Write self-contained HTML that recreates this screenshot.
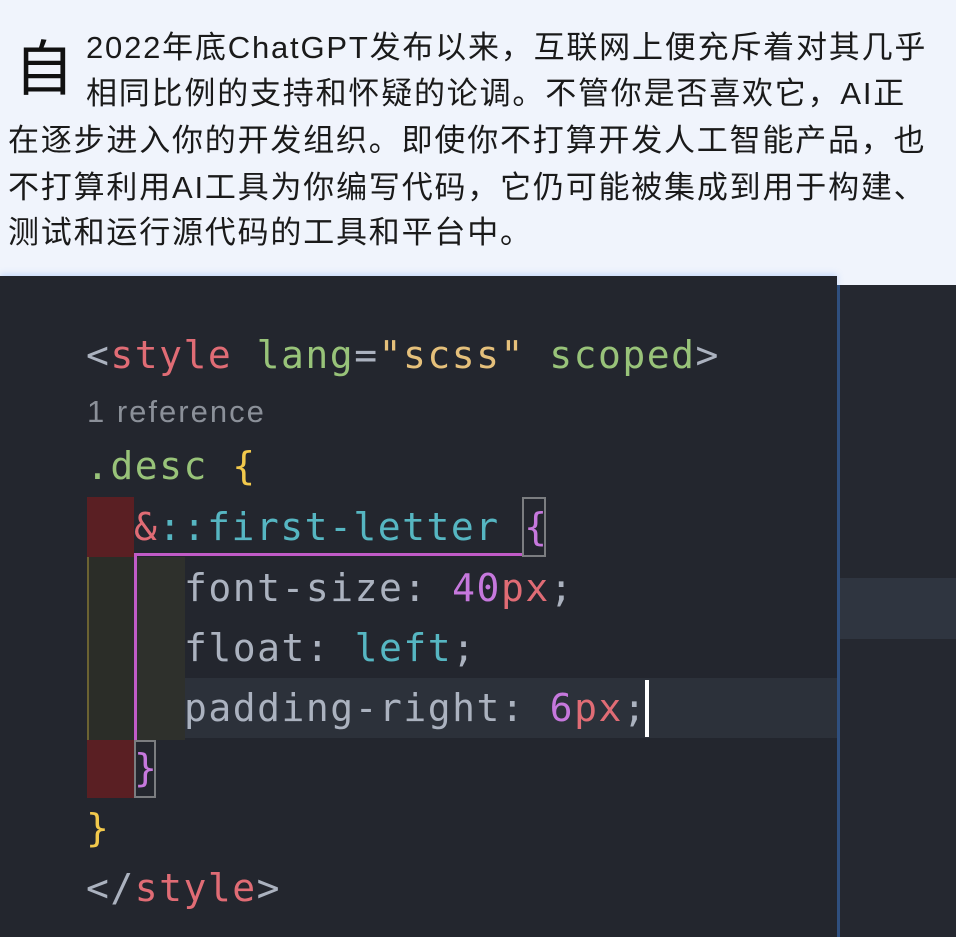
<!DOCTYPE html>
<html><head><meta charset="utf-8"><style>
*{margin:0;padding:0;box-sizing:border-box}
body{width:956px;height:937px;background:#f0f4fc;position:relative;overflow:hidden;font-family:"Liberation Sans","Noto Sans CJK SC",sans-serif}
.t{position:absolute;white-space:nowrap;font-size:31px;letter-spacing:1.8px;color:#1a1a1a;line-height:46px;height:46px}
.cap{position:absolute;left:14px;top:29px;font-size:60px;line-height:72px;color:#111;font-family:"Noto Sans CJK SC",sans-serif}
.panel{position:absolute;left:0;top:276px;width:837px;height:661px;background:#23262e;box-shadow:0 -2px 6px rgba(120,170,255,.35)}
.right{position:absolute;left:837px;top:285px;width:119px;height:652px;background:#252830;border-left:3px solid #2f4f7e}
.band{position:absolute;left:840px;top:578px;width:116px;height:61px;background:#2f3540}
.c{position:absolute;white-space:pre;font-family:"DejaVu Sans Mono","Liberation Mono",monospace;font-size:38px;letter-spacing:1.5px;line-height:60px;height:60px;color:#abb2bf}
.r{color:#e06c75}.g{color:#98c379}.o{color:#e5c07b}.y{color:#f2c94c}.tl{color:#56b6c2}.p{color:#c678dd}.gr{color:#abb2bf}
.bx{position:absolute}
</style></head><body>
<div class="cap">自</div>
<div class="t" style="left:86px;top:25px">2022年底ChatGPT发布以来，互联网上便充斥着对其几乎</div>
<div class="t" style="left:86px;top:71px">相同比例的支持和怀疑的论调。不管你是否喜欢它，AI正</div>
<div class="t" style="left:8px;top:118px">在逐步进入你的开发组织。即使你不打算开发人工智能产品，也</div>
<div class="t" style="left:8px;top:165px">不打算利用AI工具为你编写代码，它仍可能被集成到用于构建、</div>
<div class="t" style="left:8px;top:210px">测试和运行源代码的工具和平台中。</div>

<div class="panel"></div>
<div class="right"></div>
<div class="band"></div>

<div class="bx" style="left:87px;top:678px;width:750px;height:60px;background:#2c313a"></div>
<div class="bx" style="left:87px;top:497px;width:47px;height:60px;background:#5a1f23"></div>
<div class="bx" style="left:87px;top:740px;width:47px;height:58px;background:#5a1f23"></div>
<div class="bx" style="left:87px;top:557px;width:47px;height:183px;background:#2b2d28;border-left:2px solid #6b6232"></div>
<div class="bx" style="left:136px;top:557px;width:49px;height:183px;background:#2e302c"></div>
<div class="bx" style="left:134px;top:553px;width:388px;height:3px;background:#c15bc7"></div>
<div class="bx" style="left:134px;top:553px;width:3px;height:188px;background:#c15bc7"></div>
<div class="bx" style="left:522px;top:497px;width:24px;height:60px;border:2px solid #7b7d80"></div>
<div class="bx" style="left:134px;top:740px;width:22px;height:58px;border:2px solid #7b7d80"></div>

<div class="c" style="left:86px;top:325px"><span class="gr">&lt;</span><span class="r">style</span> <span class="g">lang</span><span class="gr">=</span><span class="o">"scss"</span> <span class="g">scoped</span><span class="gr">&gt;</span></div>
<div style="position:absolute;left:87px;top:394px;font-size:31px;letter-spacing:2px;line-height:36px;color:#8b9099;font-family:'Liberation Sans',sans-serif">1 reference</div>
<div class="c" style="left:86px;top:436px"><span class="g">.desc</span> <span class="y">{</span></div>
<div class="c" style="left:134px;top:497px"><span class="r">&amp;</span><span class="tl">::first-letter</span> <span class="p">{</span></div>
<div class="c" style="left:184px;top:558px">font-size: <span class="p">40</span><span class="r">px</span>;</div>
<div class="c" style="left:184px;top:618px">float: <span class="tl">left</span>;</div>
<div class="c" style="left:184px;top:678px">padding-right: <span class="p">6</span><span class="r">px</span>;</div>
<div class="bx" style="left:645px;top:680px;width:4px;height:57px;background:#fff"></div>
<div class="c" style="left:134px;top:738px"><span class="p">}</span></div>
<div class="c" style="left:86px;top:798px"><span class="y">}</span></div>
<div class="c" style="left:86px;top:858px"><span class="gr">&lt;/</span><span class="r">style</span><span class="gr">&gt;</span></div>
</body></html>
